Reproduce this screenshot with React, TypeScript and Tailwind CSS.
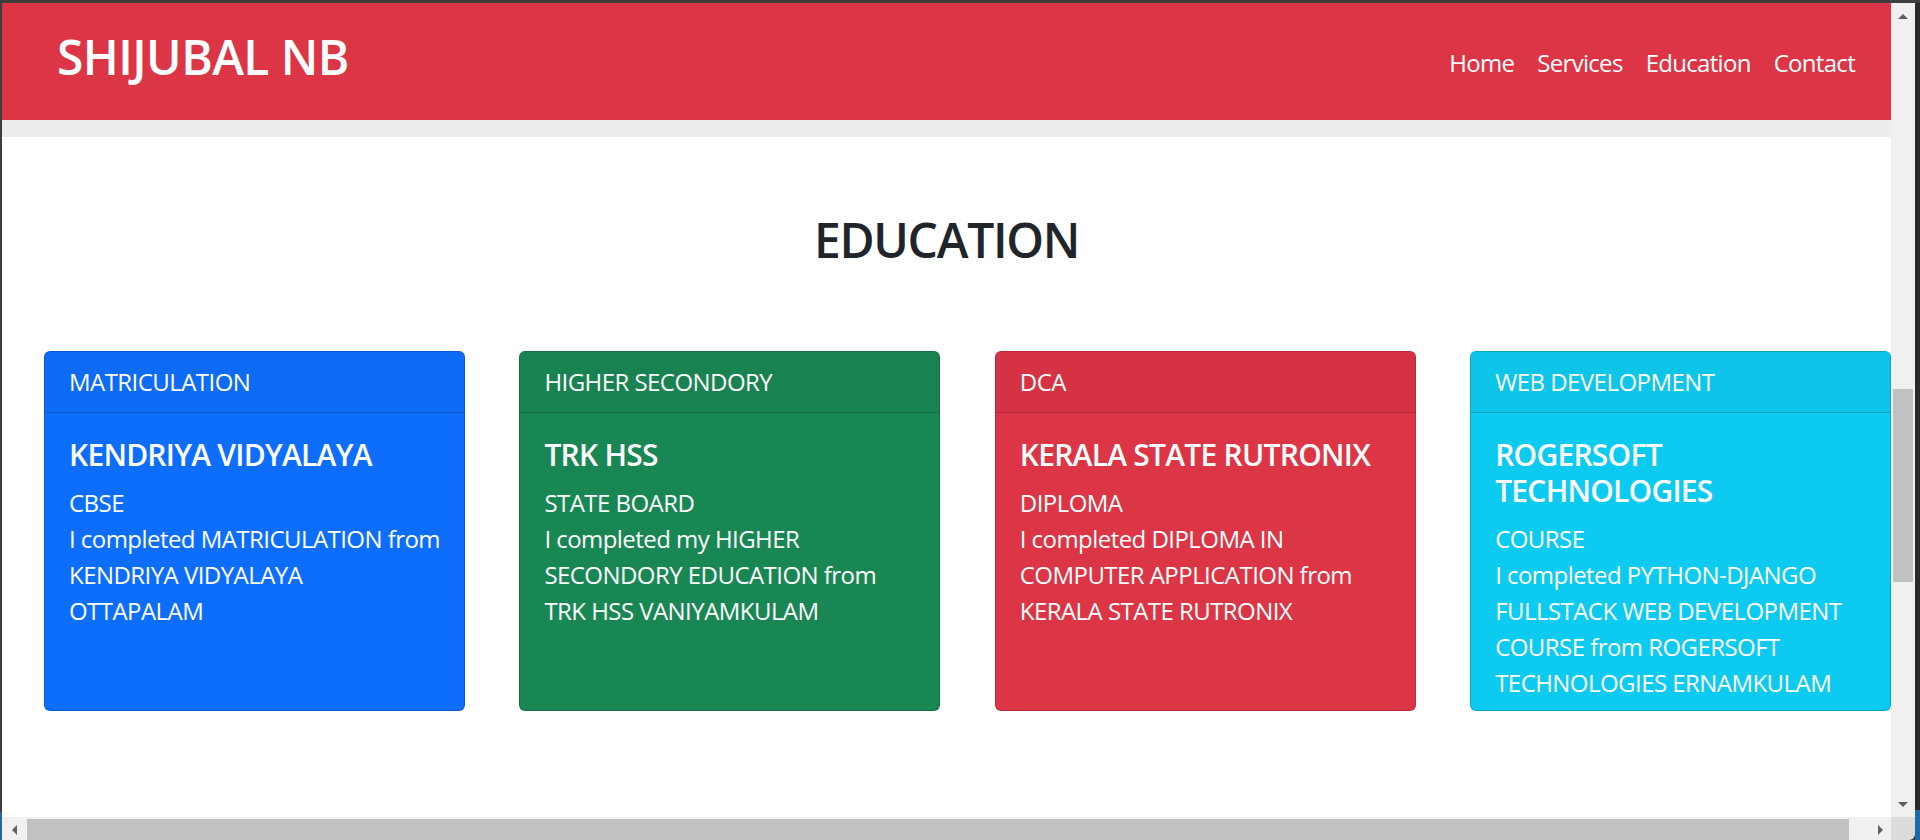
import React from "react";

type Card = {
  header: string;
  title: string[];
  lines: string[];
  body: string;
  head: string;
};

const cards: Card[] = [
  {
    header: "MATRICULATION",
    title: ["KENDRIYA VIDYALAYA"],
    lines: ["CBSE", "I completed MATRICULATION from", "KENDRIYA VIDYALAYA", "OTTAPALAM"],
    body: "bg-[#0d6efd]",
    head: "bg-[#0d6bf5]",
  },
  {
    header: "HIGHER SECONDORY",
    title: ["TRK HSS"],
    lines: ["STATE BOARD", "I completed my HIGHER", "SECONDORY EDUCATION from", "TRK HSS VANIYAMKULAM"],
    body: "bg-[#198754]",
    head: "bg-[#188351]",
  },
  {
    header: "DCA",
    title: ["KERALA STATE RUTRONIX"],
    lines: ["DIPLOMA", "I completed DIPLOMA IN", "COMPUTER APPLICATION from", "KERALA STATE RUTRONIX"],
    body: "bg-[#dc3545]",
    head: "bg-[#d53343]",
  },
  {
    header: "WEB DEVELOPMENT",
    title: ["ROGERSOFT", "TECHNOLOGIES"],
    lines: [
      "COURSE",
      "I completed PYTHON-DJANGO",
      "FULLSTACK WEB DEVELOPMENT",
      "COURSE from ROGERSOFT",
      "TECHNOLOGIES ERNAMKULAM",
    ],
    body: "bg-[#0dcaf0]",
    head: "bg-[#0dc4e9]",
  },
];

function EduCard({ c }: { c: Card }) {
  return (
    <div
      className={`w-[421px] h-[360px] shrink-0 rounded-[6px] border border-[rgba(0,0,0,0.175)] text-white ${c.body}`}
    >
      <div
        className={`px-[24px] py-[12px] text-[24px] leading-[36px] tracking-[-0.55px] rounded-t-[5px] border-b border-[rgba(0,0,0,0.175)] ${c.head}`}
      >
        {c.header}
      </div>
      <div className="p-[24px]">
        <h5 className="text-[30px] leading-[36px] font-semibold tracking-[-0.75px] mb-[12px]">
          {c.title.map((t, i) => (
            <div key={i} className="whitespace-nowrap">
              {t}
            </div>
          ))}
        </h5>
        <div className="text-[24px] leading-[36px] tracking-[-0.55px]">
          {c.lines.map((l, i) => (
            <div key={i} className="whitespace-nowrap">
              {l}
            </div>
          ))}
        </div>
      </div>
    </div>
  );
}

export default function App() {
  return (
    <div className="w-[1920px] h-[840px] bg-[#3d3d3d] flex pt-[3px] overflow-hidden font-['Open_Sans',sans-serif]">
      <div className="w-[2px] flex flex-col">
        <div className="flex-1" />
        <div className="h-[28px] bg-[#1e6aa6]" />
      </div>
      <div className="w-[1913px] flex flex-col">
        <div className="flex h-[814px]">
          <div className="w-[1889px] bg-white overflow-hidden">
            <header className="h-[117px] bg-[#dc3545] flex items-center justify-between pl-[55px] pr-[36px] text-white">
              <div className="text-[48px] leading-[58px] font-semibold tracking-[-0.6px] mb-[9px] whitespace-nowrap">
                SHIJUBAL NB
              </div>
              <nav className="flex gap-[23px] text-[24px] leading-[36px] tracking-[-0.7px] mt-[2px]">
                <a>Home</a>
                <a>Services</a>
                <a>Education</a>
                <a>Contact</a>
              </nav>
            </header>
            <div className="h-[17px] bg-[#ededed]" />
            <section className="pt-[74px]">
              <h2 className="text-center text-[48px] leading-[58px] font-semibold tracking-[-1.3px] text-[#212529]">
                EDUCATION
              </h2>
              <div className="mt-[82px] pl-[42px] flex gap-[54.4px]">
                {cards.map((c) => (
                  <EduCard key={c.header} c={c} />
                ))}
              </div>
            </section>
          </div>
          <div className="w-[24px] bg-[#f0f0f0] flex flex-col">
            <div className="h-[24px] flex items-center justify-center pt-[2px]">
              <div className="w-0 h-0 border-x-[5px] border-x-transparent border-b-[5px] border-b-[#5f5f5f]" />
            </div>
            <div className="mt-[362px] px-[2px]">
              <div className="h-[193px] bg-[#c1c1c1]" />
            </div>
            <div className="flex-1" />
            <div className="h-[24px] flex items-center justify-center pb-[2px]">
              <div className="w-0 h-0 border-x-[5px] border-x-transparent border-t-[5px] border-t-[#5f5f5f]" />
            </div>
          </div>
        </div>
        <div className="flex h-[23px]">
          <div className="w-[1889px] bg-[#f0f0f0] flex">
            <div className="w-[25px] flex items-center justify-center pt-[2px]">
              <div className="w-0 h-0 border-y-[5px] border-y-transparent border-r-[5px] border-r-[#5f5f5f]" />
            </div>
            <div className="w-[1822px] mt-[2px] bg-[#c1c1c1]" />
            <div className="flex-1" />
            <div className="w-[22px] flex items-center justify-center pt-[2px]">
              <div className="w-0 h-0 border-y-[5px] border-y-transparent border-l-[5px] border-l-[#5f5f5f]" />
            </div>
          </div>
          <div className="w-[24px] bg-[#dcdcdc] rounded-br-[6px]" />
        </div>
      </div>
      <div className="w-[5px] flex flex-col">
        <div className="flex-1 bg-[#2a2a2a]" />
        <div className="h-[30px] bg-[#1e6aa6]" />
      </div>
    </div>
  );
}
